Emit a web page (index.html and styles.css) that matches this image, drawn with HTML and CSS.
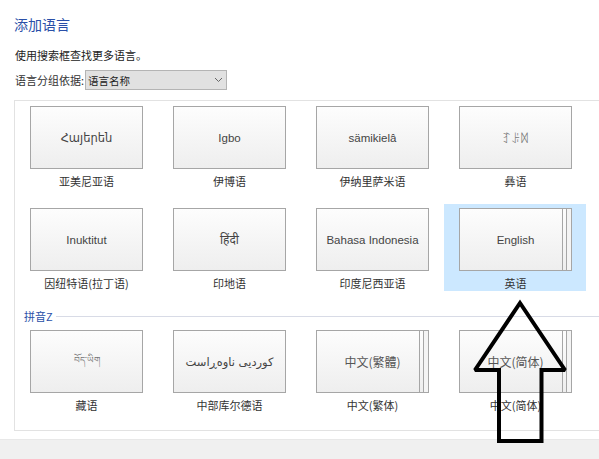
FILE: index.html
```html
<!DOCTYPE html>
<html lang="zh-CN">
<head>
<meta charset="utf-8">
<title>添加语言</title>
<link rel="stylesheet" href="styles.css">
</head>
<body>
<main class="page">
  <h1 class="title">添加语言</h1>
  <p class="hint">使用搜索框查找更多语言。</p>
  <div class="group-by">
    <span>语言分组依据:</span>
    <div class="select">
      <span>语言名称</span>
      <svg class="chevron" width="9" height="6" viewBox="0 0 9 6"><path d="M1 1l3.5 3.5L8 1" fill="none" stroke="#666" stroke-width="1"/></svg>
    </div>
  </div>
  <section class="panel">
    <div class="grid">
      <div class="cell"><div class="tile">Հայերեն</div><div class="name">亚美尼亚语</div></div>
      <div class="cell"><div class="tile">Igbo</div><div class="name">伊博语</div></div>
      <div class="cell"><div class="tile">sämikielâ</div><div class="name">伊纳里萨米语</div></div>
      <div class="cell"><div class="tile yi">ꆈꌠꉙ</div><div class="name">彝语</div></div>
      <div class="cell"><div class="tile">Inuktitut</div><div class="name">因纽特语(拉丁语)</div></div>
      <div class="cell"><div class="tile hindi">हिंदी</div><div class="name">印地语</div></div>
      <div class="cell"><div class="tile">Bahasa Indonesia</div><div class="name">印度尼西亚语</div></div>
      <div class="cell selected"><div class="tile stacked">English</div><div class="name">英语</div></div>
    </div>
    <div class="group-head"><span>拼音Z</span><i class="rule"></i></div>
    <div class="grid">
      <div class="cell"><div class="tile tibetan">བོད་ཡིག</div><div class="name">藏语</div></div>
      <div class="cell"><div class="tile kurdish">کوردیی ناوەڕاست</div><div class="name">中部库尔德语</div></div>
      <div class="cell"><div class="tile stacked cjk">中文(繁體)</div><div class="name">中文(繁体)</div></div>
      <div class="cell"><div class="tile stacked cjk">中文(简体)</div><div class="name">中文(简体)</div></div>
    </div>
  </section>
  <footer class="footer"></footer>
</main>
<svg class="arrow" width="102" height="150" viewBox="0 0 102 150">
  <path d="M49 4L94 71H70.500V142H28V71H4Z" fill="none" stroke="#000" stroke-width="4" stroke-linejoin="miter" stroke-miterlimit="1.9"/>
</svg>
</body>
</html>
```
FILE: styles.css
```css
* { box-sizing: border-box; }
html, body { margin: 0; padding: 0; height: 100%; overflow: hidden; background: #fff; }
body {
  position: relative;
  font-family: "Noto Sans CJK SC", "Noto Sans", "DejaVu Sans", sans-serif;
  font-size: 11px;
  color: #222;
}
.page { display: flex; flex-direction: column; height: 459px; padding-top: 16px; }
.title {
  margin: 0 0 0 14px;
  height: 17px;
  font-size: 14px;
  line-height: 17px;
  font-weight: 400;
  color: #2a4fa8;
}
.hint { margin: 15px 0 0 15px; height: 14px; line-height: 14px; font-size: 11px; color: #222; }
.group-by {
  display: flex;
  align-items: center;
  gap: 1px;
  margin: 8px 0 0 15px;
  height: 20px;
  color: #333;
}
.select {
  display: flex;
  align-items: center;
  justify-content: space-between;
  width: 142px;
  height: 20px;
  padding: 0 3px 0 2px;
  background: #e1e1e1;
  border: 1px solid #b4b4b4;
  font-size: 10.5px;
  color: #222;
}
.panel {
  height: 331px;
  margin: 10px 0 0 14px;
  border: 1px solid #e2e2e2;
  border-right: 0;
  padding-top: 1px;
}
.grid { display: grid; grid-template-columns: repeat(4, 142px); column-gap: 1px; row-gap: 15px; }
.cell { height: 87px; padding: 4px 14px 0 15px; }
.selected { background: #cce8ff; }
.tile {
  position: relative;
  display: flex;
  align-items: center;
  justify-content: center;
  height: 63px;
  padding-top: 1px;
  border: 1px solid #a6a6a6;
  background: linear-gradient(#fdfdfd, #eeeeee);
  font-family: "Liberation Sans", "DejaVu Sans", "Noto Sans CJK SC", sans-serif;
  font-size: 11.5px;
  color: #444;
  white-space: nowrap;
}
.cjk { font-family: "Noto Sans CJK SC", sans-serif; font-size: 12px; color: #555; padding-top: 0; }
.hindi { font-family: "Noto Sans", "DejaVu Sans", sans-serif; font-size: 12px; padding-top: 0; }
.kurdish { font-family: "DejaVu Sans", sans-serif; }
.yi { color: #777; font-size: 12px; padding-top: 0; }
.tibetan { color: #777; font-size: 9px; }
.stacked::after {
  content: "";
  position: absolute;
  top: 0;
  bottom: 0;
  right: 0;
  width: 8px;
  border-left: 1px solid #a6a6a6;
  background: linear-gradient(to right, transparent 3px, #a6a6a6 3px, #a6a6a6 4px, #f4f4f4 4px);
}
.name { margin-top: 5px; text-align: center; line-height: 15px; font-size: 11px; color: #333; white-space: nowrap; }
.group-head {
  display: flex;
  align-items: center;
  gap: 3px;
  height: 20px;
  margin-top: 15px;
  padding-left: 9px;
  font-size: 11px;
  color: #2a4fa8;
}
.rule { flex: 1; height: 1px; background: #d8dbe6; }
.footer { flex: 1; margin-top: 8px; background: #f0f0f0; border-top: 1px solid #e8e8e8; }
.arrow { position: absolute; left: 471px; top: 299px; }
```
